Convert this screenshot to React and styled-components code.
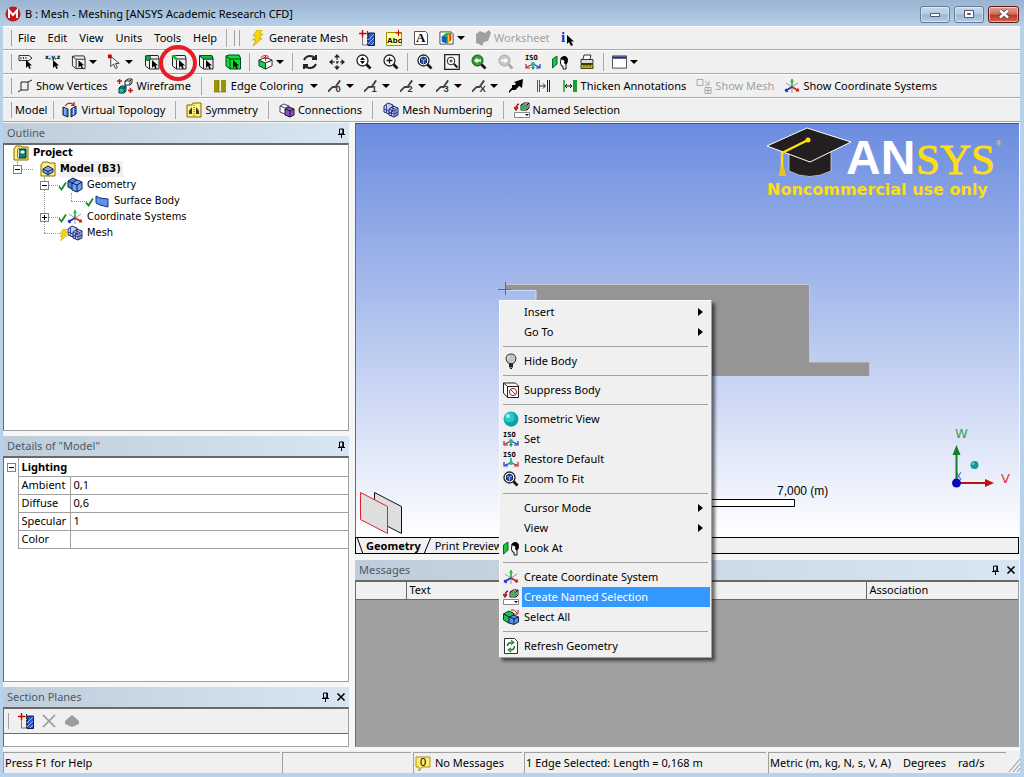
import React, { useState } from 'react';
import styled, { createGlobalStyle } from 'styled-components';

const GlobalStyle = createGlobalStyle`
  * {
    box-sizing: border-box;
  }
  body {
    margin: 0;
    font-family: "Noto Sans", "Open Sans", sans-serif;
    font-size: 11px;
    line-height: 16px;
    color: #000;
  }
  button {
    font: inherit;
    color: inherit;
    background: none;
    border: 0;
    padding: 0;
    white-space: nowrap;
  }
`;

const Window = styled.div`
  display: flex;
  flex-direction: column;
  min-height: 100vh;
  padding: 0 4px 4px 3px;
  background: #b9d1ea;
  position: relative;
  overflow: hidden;
`;

const TitleBar = styled.header`
  display: flex;
  align-items: center;
  gap: 4px;
  height: 26px;
  margin: 0 -4px 0 -3px;
  padding: 2px 5px 0 5px;
  background: linear-gradient(#9ab4d1, #b7cfe8);
`;

const Title = styled.h1`
  flex: 1;
  margin: 0;
  font-size: 11px;
  font-weight: 400;
`;

const CaptionButton = styled.button`
  display: flex;
  align-items: center;
  justify-content: center;
  width: ${(p) => (p.$close ? 31 : 30)}px;
  height: 17px;
  border: 1px solid ${(p) => (p.$close ? '#5c1a1a' : '#5f7a99')};
  border-radius: 3px;
  background: ${(p) => (p.$close
    ? 'linear-gradient(#e0a090 0%, #d0705c 48%, #b93420 52%, #d4654c 100%)'
    : 'linear-gradient(#c6d8ec 0%, #b4cae2 48%, #9bb6d3 52%, #b4cde6 100%)')};
  box-shadow: inset 0 0 0 1px rgba(255, 255, 255, 0.5);
`;

const ToolRow = styled.div`
  display: flex;
  align-items: center;
  height: 24px;
  padding-left: 4px;
  background: #f0f0f0;
  border-top: 1px solid #fff;
  border-bottom: 1px solid #a8a8a8;
`;

const Grip = styled.span`
  width: 5px;
  height: 16px;
  border-right: 1px solid #a0a0a0;
  margin-right: ${(p) => p.$space || 0}px;
`;

const Divider = styled.span`
  width: 1px;
  height: 18px;
  margin: 0 ${(p) => (p.$wide ? 5 : 3)}px;
  background: #a8a8a8;
`;

const MenuButton = styled.button`
  padding: 0 6px;
`;

const IconButton = styled.button`
  display: flex;
  align-items: center;
  justify-content: center;
  width: 27px;
  height: 20px;
`;

const DropButton = styled.button`
  display: flex;
  align-items: center;
  gap: 3px;
  width: 36px;
  height: 20px;
  padding: 0 5px;
`;

const TextButton = styled.button`
  display: flex;
  align-items: center;
  gap: 3px;
  height: 20px;
  padding: 0 ${(p) => p.$pad || 5}px;
  color: ${(p) => (p.disabled ? '#a0a0a0' : '#000')};
`;

const Caret = styled.span`
  border: 4px solid transparent;
  border-top-color: #000;
  border-bottom: 0;
  margin-left: ${(p) => (p.$wide ? 3 : 0)}px;
`;

const Workspace = styled.main`
  flex: 1;
  display: flex;
  gap: 6px;
  padding: 1px 1px 2px 0;
  background: #f6f6f6;
`;

const Sidebar = styled.aside`
  flex: 0 0 346px;
  display: flex;
  flex-direction: column;
  gap: 5px;
`;

const Content = styled.div`
  flex: 1;
  min-width: 0;
  display: flex;
  flex-direction: column;
  gap: 6px;
`;

const Pane = styled.section`
  display: flex;
  flex-direction: column;
  flex: ${(p) => p.$grow || 0} 0 auto;
  height: ${(p) => (p.$grow ? 0 : 'auto')};
`;

const PaneHeader = styled.div`
  display: flex;
  align-items: center;
  gap: 6px;
  height: 20px;
  padding: 0 3px 0 4px;
  background: linear-gradient(90deg, #bfcddb, #d8e6f3);

  h2 {
    flex: 1;
    margin: 0;
    font-size: 11px;
    font-weight: 400;
    color: #4a5a6a;
  }
  button {
    display: flex;
  }
`;

const PaneBody = styled.div`
  flex: 1;
  background: ${(p) => p.$bg || '#fff'};
  border: 1px solid #a0a0a0;
  border-top: 2px solid #696969;
  border-left-color: #696969;
`;

const Tree = styled.ul`
  list-style: none;
  margin: 0;
  padding: 0;
  font-family: "DejaVu Sans Condensed", "DejaVu Sans", sans-serif;
  font-stretch: condensed;
  font-size: 11px;
`;

const TreeRow = styled.li`
  display: flex;
  align-items: center;
  gap: 4px;
  height: 16px;
  padding-left: ${(p) => 9 + p.$depth * 27}px;
  font-weight: ${(p) => (p.$bold ? 700 : 400)};
`;

const TreeLabel = styled.span`
  padding: 0 2px 0 0;
  background: ${(p) => (p.$active ? '#f0f0f0' : 'transparent')};
`;

const TreeSlot = styled.span`
  position: relative;
  width: 23px;
  height: 16px;
  display: flex;
  align-items: center;

  &::before {
    content: '';
    position: absolute;
    left: 4px;
    top: 8px;
    width: 16px;
    border-top: 1px dotted #999;
  }
  &::after {
    content: '';
    position: absolute;
    left: 4px;
    bottom: 8px;
    height: ${(p) => p.$rise}px;
    border-left: 1px dotted #999;
  }
`;

const Toggle = styled.button`
  position: relative;
  z-index: 1;
  width: 9px;
  height: 9px;
  border: 1px solid #808080;
  background: #fff;
  display: flex;

  svg {
    width: 7px;
    height: 7px;
  }
`;

const TreeIcon = styled.span`
  position: relative;
  display: flex;
`;

const Mark = styled.span`
  position: absolute;
  left: -9px;
  top: 4px;
  display: flex;
`;

const DetailsTable = styled.table`
  width: 100%;
  border-collapse: collapse;
  table-layout: fixed;

  th, td {
    height: 18px;
    padding: 0 3px;
    font-weight: 400;
    text-align: left;
    line-height: 16px;
    border: 1px solid #a0a0a0;
  }
  tr:first-child th {
    font-weight: 700;
    border-top: 0;
  }
  td:first-child {
    padding: 0 3px;
    border: 0;
    vertical-align: middle;
  }
  td:last-child, th:last-child {
    border-right: 0;
  }
`;

const PlaneTools = styled.div`
  display: flex;
  align-items: center;
  height: 25px;
  background: #f0f0f0;
  border-bottom: 1px solid #696969;

  ${IconButton} {
    width: 23px;
  }
`;

const PlaneList = styled.div`
  height: 12px;
`;

const Viewport = styled.div`
  flex: 414 0 0;
  position: relative;
  overflow: hidden;
  border-left: 1px solid #696969;
  border-top: 1px solid #555;
  background: linear-gradient(#6b8cdf, #ffffff);
`;

const Overlay = styled.svg`
  position: absolute;
  left: ${(p) => p.$left}px;
  right: ${(p) => p.$right}px;
  top: ${(p) => p.$top}px;
  bottom: ${(p) => p.$bottom}px;
  display: block;
`;

const ViewArea = styled.div`
  flex: 431 0 0;
  display: flex;
  flex-direction: column;
`;

const ViewTabs = styled.div`
  display: flex;
  height: 17px;
  gap: 2px;
  background: #f0f0f0;
  border: 1px solid #000;

  svg {
    margin: -1px 0;
  }
`;

const ViewTab = styled.button`
  line-height: 14px;
  font-weight: ${(p) => (p.$active ? 700 : 400)};
`;

const MessagesTable = styled.table`
  width: 100%;
  border-collapse: collapse;
  table-layout: fixed;
  background: #f0f0f0;

  th {
    height: 17px;
    padding: 0 3px;
    font-weight: 400;
    text-align: left;
    border-right: 1px solid #696969;
    border-bottom: 1px solid #696969;
  }
  th:last-child {
    border-right: 0;
  }
`;

const StatusBar = styled.footer`
  display: flex;
  gap: 2px;
  height: 24px;
  padding-top: 2px;
  background: #f0f0f0;
  border-top: 1px solid #fff;
`;

const StatusCell = styled.div`
  display: flex;
  align-items: center;
  gap: 4px;
  flex: ${(p) => (p.$width ? `0 0 ${p.$width}px` : '1')};
  padding-left: 1px;
  white-space: nowrap;
  border-top: 1px solid #a0a0a0;
  border-left: 1px solid #a0a0a0;
`;

const Units = styled.span`
  margin-right: 8px;
`;

const ContextMenu = styled.div`
  position: absolute;
  left: 499px;
  top: 300px;
  width: 213px;
  padding: 1px;
  background: #f0f0f0;
  border: 1px solid #fafafa;
  border-right-color: #a0a0a0;
  border-bottom-color: #a0a0a0;
  box-shadow: 3px 3px 3px rgba(0, 0, 0, 0.55);
`;

const ContextItem = styled.button`
  display: flex;
  align-items: center;
  width: 100%;
  height: 20px;
  text-align: left;
`;

const ContextIcon = styled.span`
  display: flex;
  width: 21px;
  padding-left: 2px;
`;

const ContextLabel = styled.span`
  flex: 1;
  display: flex;
  align-items: center;
  justify-content: space-between;
  height: 20px;
  padding: 0 7px 0 2px;
  color: ${(p) => (p.$active ? '#fff' : '#000')};
  background: ${(p) => (p.$active ? '#3399ff' : 'transparent')};
`;

const Submenu = styled.span`
  border: 4px solid transparent;
  border-left: 5px solid #000;
  border-right: 0;
`;

const ContextRule = styled.hr`
  height: 1px;
  margin: 4px 2px;
  border: 0;
  background: #a0a0a0;
`;

const Highlight = styled.svg`
  position: absolute;
  left: 158px;
  top: 43px;
  pointer-events: none;
`;

const Brand = styled.div`
  position: absolute;
  right: 16px;
  top: 3px;
  width: 238px;
`;

const cursor = <path d="M8 6v8l2-2 1.4 3 1.4-.7L11.500 11.500H14z" fill="#000" />;
const boxLines = <path d="M1.500 2l3-.5h9.500l1 3v10.500H5.500L1.500 12zM1.500 2l4 3h9.500M5.500 5v10" fill="none" stroke="#222" />;
const zoomLens = (
  <>
    <circle cx="6.500" cy="6.500" r="5.500" fill="#fff" stroke="#222" strokeWidth="1.300" />
    <path d="M10.500 10.500l4 4" stroke="#111" strokeWidth="2.600" />
  </>
);
const isoText = <text x="0" y="6" fontFamily="DejaVu Sans Mono" fontSize="7" fontWeight="700">ISO</text>;

// all glyphs sit on a 16x16 grid
const GLYPHS = {
  app: (
    <>
      <circle cx="8" cy="8" r="7.500" fill="#c4161c" />
      <path d="M4 12V4.500L8 9l4-4.500V12" fill="none" stroke="#fff" strokeWidth="2" />
    </>
  ),
  bolt: <path d="M7 0h5L9.500 4H13L8.500 8.500H12L3 16l3-6H2.500L6.500 6H3z" fill="#ffd800" stroke="#b59000" strokeWidth=".6" />,
  section: (
    <>
      <path d="M3.500 4v11H9M6 3.500h3" fill="none" stroke="#778" />
      <path d="M9 3h6.500v12.500H9z" fill="#2f55c8" stroke="#123" />
      <path d="M9 10l6-6M9 14l6-6M12 15l3-3" stroke="#9db8ff" />
      <path d="M3.500 0v7M0 3.500h7" stroke="#c00" strokeWidth="1.400" />
      <path d="M8.500 1v15" stroke="#333" strokeDasharray="2 1" />
    </>
  ),
  abc: (
    <>
      <path d="M.5 2.500h15v13H.5z" fill="#ffffa0" stroke="#a09000" />
      <text x="1" y="13" fontFamily="Liberation Sans" fontSize="8" fontWeight="700">Abc</text>
      <path d="M12.500 0v6M9.500 3h6" stroke="#c00" />
    </>
  ),
  letter: (
    <>
      <path d="M1.500 1.500h11l2 2v11h-13z" fill="#fff" stroke="#555" />
      <text x="3" y="12" fontFamily="Liberation Serif" fontSize="13" fontWeight="700">A</text>
    </>
  ),
  image: (
    <>
      <path d="M1 1.500h12l2 2V14.500H1z" fill="#fff" stroke="#444" />
      <path d="M3 6l4-3 6-1v8l-4 4-6-2z" fill="#18b848" />
      <path d="M3 6l5 1v6.500l-5-1.500z" fill="#1b4ee0" />
      <path d="M11 3.500l2-1.500v8l-2 2z" fill="#f03010" />
      <path d="M9.500 5l1.500-1.500v8.500l-1.500 1.500z" fill="#ffd000" />
    </>
  ),
  worksheet: <path d="M1 4l4-3 5 2 4-3 2 3-3 8-4 1-2 4-3-2-3-1z" fill="#a0a0a0" />,
  info: (
    <>
      <text x="1" y="12" fontFamily="Liberation Serif" fontSize="15" fontWeight="700" fill="#1030e0">i</text>
      <path d="M7 5v9l2-2 2 4 2-1-2-3.500h3z" />
    </>
  ),
  label: (
    <>
      <path d="M1 1.500h10l3 2.500-3 2.500H1zM3 3v2M5.500 3v2M8 3v2" fill="none" stroke="#333" />
      {cursor}
    </>
  ),
  xyz: (
    <>
      <text x="0" y="5" fontFamily="DejaVu Sans" fontSize="6" fontWeight="700">x,y,z</text>
      {cursor}
    </>
  ),
  boxSelect: <>{boxLines}{cursor}</>,
  arrowSelect: (
    <>
      <path d="M4 2v11l3-3 2 5 2-1-2-4.500h4z" fill="#fff" stroke="#333" />
      <path d="M1 0h4v4H1z" fill="#c00" />
    </>
  ),
  vertexSelect: <>{boxLines}<circle cx="4" cy="4" r="2.500" fill="#18b040" stroke="#052" />{cursor}</>,
  edgeSelect: <>{boxLines}<path d="M1.500 1.500l4.500 4" stroke="#10c030" strokeWidth="3" />{cursor}</>,
  faceSelect: <>{boxLines}<path d="M1.500 1.500h12l1.500 3.500H5z" fill="#14c032" stroke="#053" />{cursor}</>,
  bodySelect: (
    <>
      <path d="M1 2l3-1h10l1.500 3v11H5L1 12z" fill="#11e030" stroke="#042" />
      <path d="M1 2l4 3h10M5 5v10" fill="none" stroke="#042" />
      {cursor}
    </>
  ),
  extend: (
    <>
      <path d="M1 6l7 3v6.500L1 12z" fill="#19d44a" stroke="#033" />
      <path d="M8 9l7-3v6l-7 3.500z" fill="#fff" stroke="#222" />
      <path d="M1 6l7-3 7 3-7 3z" fill="#fff" stroke="#222" />
      <path d="M3 3q5-4 9 0M8 1v6M5 4h6" fill="none" stroke="#d02020" />
    </>
  ),
  rotate: <path d="M2 6q2-4 6-4 3 0 5 2M14 1v4h-4M14 10q-2 4-6 4-3 0-5-2M2 15v-4h4" fill="none" stroke="#222" strokeWidth="2" />,
  pan: (
    <>
      <path d="M8 3v10M3 8h10" stroke="#222" strokeDasharray="3 1" />
      <path d="M8 0l3 3.500H5zM8 16l3-3.500H5zM0 8l3.500-3v6zM16 8l-3.500-3v6z" fill="#222" />
    </>
  ),
  zoomUpDown: <>{zoomLens}<path d="M6.500 3L9 6H4zM6.500 10L9 7H4z" /></>,
  zoomIn: <>{zoomLens}<path d="M6.500 3.500v6M3.500 6.500h6" stroke="#111" strokeWidth="1.300" /></>,
  zoomFit: (
    <>
      {zoomLens}
      <path d="M6.500 3l3 1.500v4l-3 1.500-3-1.500v-4z" fill="#2d50a8" stroke="#0b1b55" />
      <path d="M3.500 4.800l3 1.500 3-1.500M6.500 6.300V10" fill="none" stroke="#bcd0ff" strokeWidth=".7" />
    </>
  ),
  zoomBox: (
    <>
      <path d="M.7.7h14.600v14.600H.7z" fill="#f4f4f4" stroke="#222" strokeWidth="1.300" />
      <circle cx="7" cy="7" r="3.800" fill="#fff" stroke="#222" />
      <path d="M10 10l3.500 3.500" stroke="#111" strokeWidth="2" />
      <path d="M5.500 7h3M7 5.500v3" stroke="#222" />
    </>
  ),
  zoomPrev: (
    <>
      <circle cx="6.500" cy="6.500" r="5.500" fill="#2ca02c" stroke="#145014" />
      <path d="M10.500 10.500l4 4" stroke="#111" strokeWidth="2.600" />
      <path d="M3 6.500l3.500-3V5.500H10v2H6.500v2z" fill="#fff" />
    </>
  ),
  zoomNext: (
    <>
      <circle cx="6.500" cy="6.500" r="5.500" fill="#c8c8c8" stroke="#a8a8a8" />
      <path d="M10.500 10.500l4 4" stroke="#a8a8a8" strokeWidth="2.600" />
      <path d="M10 6.500l-3.500-3V5.500H3v2h3.500v2z" fill="#fff" />
    </>
  ),
  iso: (
    <>
      {isoText}
      <path d="M8 14v-4" stroke="#18a040" strokeWidth="1.500" />
      <path d="M8 10l-6 3M1 10v4h4" fill="none" stroke="#c02020" strokeWidth="1.200" />
      <path d="M8 10l6 3M15 10v4h-4" fill="none" stroke="#1838c0" strokeWidth="1.200" />
      <circle cx="8" cy="10" r="2" fill="#16b8b8" />
      <path d="M6 13h4l-2 3z" fill="#18a040" />
    </>
  ),
  isoRestore: (
    <>
      {isoText}
      <path d="M8 7v5" stroke="#18a040" strokeWidth="1.500" />
      <path d="M8 12l-6 2M1 11v4h4" fill="none" stroke="#1838c0" strokeWidth="1.200" />
      <path d="M8 12l6 2M15 11v4h-4" fill="none" stroke="#c02020" strokeWidth="1.200" />
      <circle cx="8" cy="12" r="2" fill="#16b8b8" />
    </>
  ),
  lookAt: (
    <>
      <path d="M.5 5L5 2v8L.5 14z" fill="#18c838" stroke="#063" />
      <path d="M9 4q3-2.500 6 0 1 3 0 5l-1 1v5h-3v-3H9.500L8.500 9z" fill="#fff" stroke="#111" />
      <path d="M8.500 4.500Q10 1.500 13 2q3 1 2.500 4 0 3-2 4.500L12 9q1-2-.5-3-1.500 0-3-1.500z" />
    </>
  ),
  print: (
    <>
      <path d="M4 5l1-4h7l-1 4" fill="#fff" stroke="#333" />
      <path d="M2 5.500h12v4H2z" fill="#ddd" stroke="#333" />
      <path d="M2 10.500h12v4H2z" fill="#c8b820" stroke="#443c00" />
      <path d="M5 11v2M8 11v2M11 11v2" stroke="#443c00" />
    </>
  ),
  windowView: (
    <>
      <path d="M.5 1.500h15v13H.5z" fill="#fff" stroke="#444" />
      <path d="M1 2h14v2.500H1z" fill="#203080" />
    </>
  ),
  vertices: <path d="M4 4h7v8H4zM11 4l4-2M4 12l-3 2" fill="none" stroke="#222" />,
  wireframe: (
    <>
      <path d="M8 3l3-2h4v4l-2 2H8zM8 3h5v4M13 3l2-2" fill="#fff" stroke="#222" />
      <path d="M2 10l2-2h5v5l-2 2H2zM2 10h5v5M7 10l2-2" fill="#18c0c0" stroke="#033" />
      <path d="M0 3h5M2.500 1v5M11 12.500h5M13.500 10v5" stroke="#b02020" strokeWidth="1.500" />
    </>
  ),
  edgeColor: (
    <>
      <path d="M2 2h5v12H2zM9 2h5v12H9z" fill="#9a9400" />
      <path d="M2 14h12M7 2v12" stroke="#666000" strokeWidth=".6" />
    </>
  ),
  direction: <path d="M15 1l-1 9-3-2-3.500 4H4l-3 3v-2l3-3.500V7h3l1-1.500L6 4z" fill="#000" />,
  vectors: (
    <>
      <path d="M2.500 2v12M4.500 2v12" stroke="#d02020" />
      <path d="M12.500 2v12M14.500 2v12" stroke="#222" />
      <path d="M5 8h5M8 5.500L10.500 8 8 10.500" fill="none" stroke="#222" />
    </>
  ),
  thicken: (
    <>
      <path d="M2 2v12" stroke="#18a030" strokeWidth="1.500" />
      <path d="M11 2h4v12h-4z" fill="#18a030" />
      <path d="M3 8h7M5 6L3 8l2 2M8 6l2 2-2 2" fill="none" stroke="#111" />
    </>
  ),
  showMesh: <path d="M1 1.500h6v6H1zM9 3l4 4M13 3v4H9M9 9.500h6v6H9zM12 9.500v6M9 12.500h6" fill="none" stroke="#aaa" />,
  coords: (
    <>
      <path d="M2 5l6 4 6-4M8 9v6" fill="none" stroke="#999" />
      <path d="M8 9V1M6.500 3.500h3" stroke="#18b838" strokeWidth="1.600" />
      <path d="M8 9l-7 4M1.500 11l2 3" stroke="#1830d0" strokeWidth="1.800" />
      <path d="M8 9l7 4M12.500 13.500l2-3" stroke="#d02020" strokeWidth="1.600" />
    </>
  ),
  topology: (
    <>
      <path d="M1 5l5 2v8l-5-2zM9 7l5-3v8l-5 3z" fill="#3f7fd8" stroke="#123" />
      <path d="M3 6v7M11.500 6v7" stroke="#bcd8ff" />
      <path d="M3 4q4-5 9-1M12 0v3.500H9" fill="none" stroke="#c02020" strokeWidth="1.200" />
    </>
  ),
  symmetry: (
    <>
      <path d="M1 3h5l1-2h8v14H1z" fill="#fff27a" stroke="#806800" />
      <path d="M3 12V9l3-4v7zM13 12V9l-3-4v7z" fill="#333" />
      <path d="M8 3v11" stroke="#555" strokeDasharray="1 1" />
    </>
  ),
  connections: (
    <>
      <path d="M1 4l4-2 5 2v6l-4 2-5-2z" fill="#fff" stroke="#446" />
      <path d="M6 7l4-2 5 2v6l-4 2-5-2z" fill="#9050c8" stroke="#213" />
      <path d="M6 7l5 2 4-2M11 9v6" fill="none" stroke="#213" />
      <path d="M1 4l5 2 4-2" fill="none" stroke="#446" />
    </>
  ),
  mesh: (
    <>
      <path d="M1 4l4-3 5 2v6l-4 3-5-2zM6 7l4-3 5 2v7l-4 2-5-2z" fill="#c0cdf6" stroke="#1c2a78" />
      <path d="M1 7l5 2M3.500 2.500v8M6 7l5 2 4-3M11 9v6M6 10l5 2 4-2M8.500 8v6M13 8v6M8 5.500l5 2" fill="none" stroke="#1c2a78" strokeWidth=".8" />
    </>
  ),
  named: (
    <>
      <path d="M7 3l3-2h5v5l-2 2H7zM7 3h6v5M13 3l2-2" fill="#fff" stroke="#111" />
      <path d="M8 3.500h4V7H8z" fill="#20c040" />
      <path d="M5 2Q2 3 2 7M0 5l2 3 2-3" fill="none" stroke="#b01818" strokeWidth="1.400" />
      <path d="M.5 10.500h15v5H.5z" fill="#fff" stroke="#888" />
      <path d="M11 12h4l-2 2z" />
    </>
  ),
  project: (
    <>
      <path d="M1 4l2-3h5l1 1h6v13H1z" fill="#fff06a" stroke="#806c00" />
      <path d="M5 4h8v9H5z" fill="#0c8070" stroke="#023" />
      <path d="M5.500 4v9M8 6h3v2H8z" fill="#fff" stroke="#fff" strokeWidth=".8" />
    </>
  ),
  model: (
    <>
      <path d="M1 4l2-3h5l1 1h6v13H1z" fill="#ffef78" stroke="#806c00" />
      <path d="M3 8l5-3 5 3v3l-5 3-5-3z" fill="#7da0f0" stroke="#13255f" />
      <path d="M3 8l5 2.500L13 8M8 10.500V14" fill="none" stroke="#13255f" />
    </>
  ),
  geometry: (
    <>
      <path d="M1 4l5-3 4 2v7l-5 2-4-2z" fill="#4f86dc" stroke="#0d1f50" />
      <path d="M5 6l5-3 5 2v7l-5 3-5-2z" fill="#6fa4f2" stroke="#0d1f50" />
      <path d="M5 6l5 2 5-3M10 8v7M1 4l4 2" fill="none" stroke="#0d1f50" />
    </>
  ),
  surface: <path d="M2 3l4 2 8 1v8l-8-2-4-2z" fill="#5f94ee" stroke="#12307c" />,
  bulb: (
    <>
      <path d="M5.500 10.500Q3 8 3 5.500 3.500 1 8 1t5 4.500q0 2.500-2.500 5z" fill="#c4c4c4" stroke="#333" />
      <path d="M6 3.500q-1 1-1 2.500" fill="none" stroke="#fff" />
      <path d="M6 11h4v3.500H6z" fill="#222" />
      <path d="M7 15.500h2" stroke="#222" />
    </>
  ),
  suppress: (
    <>
      <path d="M.5 1h12l3 3v11.500h-11L.5 11zM.5 1l4 3.500h11M4.500 4.500v11" fill="#fff" stroke="#222" />
      <circle cx="10" cy="10" r="3.600" fill="none" stroke="#b02020" />
      <path d="M7.500 7.500l5 5" stroke="#b02020" />
    </>
  ),
  sphere: (
    <>
      <circle cx="8" cy="8" r="7.500" fill="#18b4b4" />
      <circle cx="8.500" cy="9" r="6.500" fill="#10a0a4" />
      <circle cx="6.500" cy="6.500" r="5" fill="#28c8c8" />
      <circle cx="5" cy="5" r="2" fill="#a0f4f0" />
    </>
  ),
  selectAll: (
    <>
      <path d="M.5 5l5-3 5 2v7l-5 3-5-3z" fill="#20c040" stroke="#042" />
      <path d="M6 8l5-2 4.500 2v5L11 15.500 6 14z" fill="#5c90e8" stroke="#0d1f50" />
      <path d="M6 8l5 2 4.500-2M11 10v5M.5 5l5.500 3" fill="none" stroke="#0d1f50" />
      <path d="M8 1q4-1 6 3M15 1v4h-4" fill="none" stroke="#c02020" />
    </>
  ),
  refresh: (
    <>
      <path d="M1.500.5h10l3 3v12h-13z" fill="#fff" stroke="#333" />
      <path d="M4.500 8q0-3.500 4-3.500M8 2.500l2.500 2L8 6.500M11.500 8q0 4-4 4M8 10l-2.500 2L8 14" fill="none" stroke="#148024" strokeWidth="1.500" />
    </>
  ),
  remove: <path d="M2 2l12 12M14 2L2 14" stroke="#999" strokeWidth="1.700" />,
  plane: <path d="M8 2l7 6v3l-7 3-7-3V8z" fill="#9c9c9c" />,
  balloon: (
    <>
      <path d="M1 2h14v10H7l-3 4v-4H1z" fill="#ffee70" stroke="#a89020" />
      <text x="5" y="11" fontFamily="Liberation Sans" fontSize="11">0</text>
    </>
  ),
};

const Icon = ({ name, size = 16 }) => (
  <svg width={size} height={size} viewBox="0 0 16 16" aria-hidden="true">{GLYPHS[name]}</svg>
);

// slanted line with its connection count next to it
const EdgeIcon = ({ count }) => (
  <svg width="16" height="16" viewBox="0 0 16 16" aria-hidden="true">
    <path d="M0 14L5 9h3l5-7" fill="none" stroke="#444" strokeWidth="2" />
    <text x="8" y="14" fontFamily="Liberation Sans" fontSize="10" fontWeight="700" fill="#333">{count}</text>
  </svg>
);

const PinGlyph = () => (
  <svg width="9" height="10" viewBox="0 0 9 10" aria-hidden="true">
    <path d="M2.500 1h4v5h-4zM1 6.500h7M4.500 7v3" fill="none" stroke="#000" />
    <path d="M6 1v5" stroke="#000" strokeWidth="1.500" />
  </svg>
);

const CloseGlyph = () => (
  <svg width="10" height="10" viewBox="0 0 10 10" aria-hidden="true">
    <path d="M1.500 1.500l7 7M8.500 1.500l-7 7" stroke="#000" strokeWidth="1.600" />
  </svg>
);

const ToolIcon = ({ name, label, disabled }) => (
  <IconButton aria-label={label} disabled={disabled}><Icon name={name} /></IconButton>
);

const DropIcon = ({ name, label }) => (
  <DropButton aria-label={label}><Icon name={name} /><Caret /></DropButton>
);

const PaneTitle = ({ title, closable }) => (
  <PaneHeader>
    <h2>{title}</h2>
    <button aria-label={`Pin ${title}`}><PinGlyph /></button>
    {closable && <button aria-label={`Close ${title}`}><CloseGlyph /></button>}
  </PaneHeader>
);

const MENUS = ['File', 'Edit', 'View', 'Units', 'Tools', 'Help'];

const TREE = [
  { label: 'Project', icon: 'project', depth: 0, bold: true },
  { label: 'Model (B3)', icon: 'model', depth: 0, bold: true, toggle: '-', rise: 8, active: true },
  { label: 'Geometry', icon: 'geometry', depth: 1, toggle: '-', rise: 8, mark: 'check' },
  { label: 'Surface Body', icon: 'surface', depth: 2, slot: true, rise: 8, mark: 'check' },
  { label: 'Coordinate Systems', icon: 'coords', depth: 1, toggle: '+', rise: 32, mark: 'check' },
  { label: 'Mesh', icon: 'mesh', depth: 1, slot: true, rise: 16, mark: 'bolt' },
];

const DETAILS = [
  ['Ambient', '0,1'],
  ['Diffuse', '0,6'],
  ['Specular', '1'],
  ['Color', ''],
];

const CONTEXT = [
  { label: 'Insert', sub: true },
  { label: 'Go To', sub: true },
  null,
  { label: 'Hide Body', icon: 'bulb' },
  null,
  { label: 'Suppress Body', icon: 'suppress' },
  null,
  { label: 'Isometric View', icon: 'sphere' },
  { label: 'Set', icon: 'iso' },
  { label: 'Restore Default', icon: 'isoRestore' },
  { label: 'Zoom To Fit', icon: 'zoomFit' },
  null,
  { label: 'Cursor Mode', sub: true },
  { label: 'View', sub: true },
  { label: 'Look At', icon: 'lookAt' },
  null,
  { label: 'Create Coordinate System', icon: 'coords' },
  { label: 'Create Named Selection', icon: 'named' },
  { label: 'Select All', icon: 'selectAll' },
  null,
  { label: 'Refresh Geometry', icon: 'refresh' },
];

const ToggleBox = ({ open, label }) => (
  <Toggle aria-label={label}>
    <svg viewBox="0 0 7 7" aria-hidden="true">
      <path d={open ? 'M1 3.500h5' : 'M1 3.500h5M3.500 1v5'} stroke="#000" />
    </svg>
  </Toggle>
);

const OutlineTree = () => (
  <Tree>
    {TREE.map((node) => (
      <TreeRow key={node.label} $depth={node.depth} $bold={node.bold}>
        {(node.toggle || node.slot) && (
          <TreeSlot $rise={node.rise}>
            {node.toggle && <ToggleBox open={node.toggle === '-'} label={`Toggle ${node.label}`} />}
          </TreeSlot>
        )}
        <TreeIcon>
          <Icon name={node.icon} />
          {node.mark && (
            <Mark>
              {node.mark === 'bolt' ? <Icon name="bolt" size={12} /> : (
                <svg width="10" height="10" viewBox="0 0 10 10" aria-hidden="true">
                  <path d="M1 5.500L3.500 8.500 8 1.500" fill="none" stroke="#128a2a" strokeWidth="1.800" />
                </svg>
              )}
            </Mark>
          )}
        </TreeIcon>
        <TreeLabel $active={node.active}>{node.label}</TreeLabel>
      </TreeRow>
    ))}
  </Tree>
);

const Logo = () => (
  <Brand>
    <svg width="238" height="76" viewBox="0 0 238 76" role="img" aria-label="ANSYS Noncommercial use only">
      <path d="M24 22v22q20 11 42 0V22z" fill="#231f20" stroke="#cdd6ee" strokeWidth=".8" />
      <path d="M2 19L42 1l44 14-41 20z" fill="#231f20" stroke="#fff" />
      <path d="M43 13L17 26v20" fill="none" stroke="#ffdd15" strokeWidth="2.500" />
      <path d="M15.500 40h3.500l2 9h-7.500z" fill="#e8c41a" />
      <circle cx="43" cy="13" r="2.500" fill="#ffdd15" />
      <text x="81" y="47" fontFamily="Liberation Sans" fontSize="48" fontWeight="700" fill="#fff">AN</text>
      <text x="151" y="47" fontFamily="Liberation Serif" fontSize="43" fill="#ffdd15" stroke="#ffdd15" strokeWidth=".8">SYS</text>
      <text x="231" y="19" fontFamily="Liberation Sans" fontSize="7" fill="#ffdd15">®</text>
      <text x="2" y="68" fontFamily="DejaVu Sans" fontSize="16" fontWeight="700" fill="#ffdd15">Noncommercial use only</text>
    </svg>
  </Brand>
);

const Scene = () => (
  <Viewport>
    <Overlay $left={142} $top={158} width="376" height="98" viewBox="0 0 376 98">
      <path d="M7 2h305v78h60v14H38V8H7z" fill="#959595" />
      <path d="M7 2.500h304.500v77.500h60V94" fill="none" stroke="#c8c8c8" />
      <path d="M7 8.500h31V30" fill="none" stroke="#cfdcff" />
      <path d="M7.500 0v13M0 7.500h13" stroke="#4468c8" />
    </Overlay>
    <Overlay $left={4} $bottom={2} width="44" height="44" viewBox="0 0 44 44">
      <path d="M14.500 1.500l27 14v27l-27-14z" fill="#dedede" stroke="#111" />
      <path d="M.5 1.500l27 14v27l-27-14z" fill="#dedede" stroke="#e02030" />
    </Overlay>
    <Overlay $left={300} $bottom={29} width="180" height="26" viewBox="0 0 180 26">
      <text x="121" y="13" fontFamily="Liberation Sans" fontSize="12">7,000 (m)</text>
      <path d="M0 17.500h138.500v7H0z" fill="#fff" stroke="#000" />
    </Overlay>
    <Overlay $right={5} $bottom={44} width="64" height="70" viewBox="0 0 64 70">
      <text x="5" y="15" fontFamily="DejaVu Sans" fontSize="13" fill="#3aa648">W</text>
      <text x="51" y="60" fontFamily="DejaVu Sans" fontSize="13" fill="#e03030">V</text>
      <text x="5" y="57" fontFamily="DejaVu Sans" fontSize="10" fill="#5060e0">X</text>
      <path d="M6.500 60V30" stroke="#108020" strokeWidth="2" />
      <path d="M6.500 22l4 10h-8z" fill="#108020" />
      <path d="M7 60h30" stroke="#c01010" strokeWidth="2" />
      <path d="M44 60l-9-4v8z" fill="#c01010" />
      <circle cx="6.500" cy="60" r="4.500" fill="#0a0ab4" />
      <circle cx="24.500" cy="42" r="4" fill="#109898" />
      <circle cx="23" cy="40.500" r="1.500" fill="#50d0d0" />
    </Overlay>
    <Logo />
  </Viewport>
);

const App = () => {
  const [hovered, setHovered] = useState('Create Named Selection');

  return (
    <>
      <GlobalStyle />
      <Window>
        <TitleBar>
          <Icon name="app" />
          <Title>B : Mesh - Meshing [ANSYS Academic Research CFD]</Title>
          <CaptionButton aria-label="Minimize">
            <svg width="12" height="8"><path d="M1.500 3.500h9v3h-9z" fill="#fff" stroke="#556" /></svg>
          </CaptionButton>
          <CaptionButton aria-label="Restore">
            <svg width="12" height="10"><path d="M1.500 1.500h9v7h-9zM4.500 4.500h3v1h-3z" fill="#fff" stroke="#556" /></svg>
          </CaptionButton>
          <CaptionButton aria-label="Close" $close>
            <svg width="12" height="10">
              <path d="M2 1.500l8 7M10 1.500l-8 7" stroke="#544" strokeWidth="4" />
              <path d="M2 1.500l8 7M10 1.500l-8 7" stroke="#fff" strokeWidth="2.400" />
            </svg>
          </CaptionButton>
        </TitleBar>

        <ToolRow>
          <Grip />
          {MENUS.map((menu) => <MenuButton key={menu}>{menu}</MenuButton>)}
          <Divider />
          <Grip />
          <Grip $space={5} />
          <TextButton><Icon name="bolt" />Generate Mesh</TextButton>
          <ToolIcon name="section" label="New section plane" />
          <ToolIcon name="abc" label="Annotation" />
          <ToolIcon name="letter" label="Comment" />
          <DropIcon name="image" label="Figure" />
          <TextButton disabled><Icon name="worksheet" />Worksheet</TextButton>
          <ToolIcon name="info" label="Selection information" />
        </ToolRow>

        <ToolRow>
          <Grip />
          <ToolIcon name="label" label="Label" />
          <ToolIcon name="xyz" label="Coordinates" />
          <DropIcon name="boxSelect" label="Select mode" />
          <DropIcon name="arrowSelect" label="Selection type" />
          <ToolIcon name="vertexSelect" label="Vertex" />
          <ToolIcon name="edgeSelect" label="Edge" />
          <ToolIcon name="faceSelect" label="Face" />
          <ToolIcon name="bodySelect" label="Body" />
          <Divider />
          <DropIcon name="extend" label="Extend selection" />
          <Divider />
          <ToolIcon name="rotate" label="Rotate" />
          <ToolIcon name="pan" label="Pan" />
          <ToolIcon name="zoomUpDown" label="Zoom" />
          <ToolIcon name="zoomIn" label="Box zoom" />
          <Divider />
          <ToolIcon name="zoomFit" label="Zoom to fit" />
          <ToolIcon name="zoomBox" label="Magnifier" />
          <ToolIcon name="zoomPrev" label="Previous view" />
          <ToolIcon name="zoomNext" label="Next view" disabled />
          <ToolIcon name="iso" label="Isometric" />
          <ToolIcon name="lookAt" label="Look at" />
          <ToolIcon name="print" label="Rescale annotation" />
          <Divider />
          <DropIcon name="windowView" label="Viewports" />
        </ToolRow>

        <ToolRow>
          <Grip />
          <TextButton><Icon name="vertices" />Show Vertices</TextButton>
          <TextButton><Icon name="wireframe" />Wireframe</TextButton>
          <Divider $wide />
          <TextButton><Icon name="edgeColor" />Edge Coloring<Caret $wide /></TextButton>
          {['0', '1', '2', '3', 'X'].map((count) => (
            <DropButton key={count} aria-label={`Edges ${count}`}>
              <EdgeIcon count={count} />
              <Caret />
            </DropButton>
          ))}
          <ToolIcon name="direction" label="Direction" />
          <ToolIcon name="vectors" label="Vectors" />
          <TextButton><Icon name="thicken" />Thicken Annotations</TextButton>
          <TextButton disabled><Icon name="showMesh" />Show Mesh</TextButton>
          <TextButton><Icon name="coords" />Show Coordinate Systems</TextButton>
        </ToolRow>

        <ToolRow>
          <Grip />
          <TextButton $pad={3}>Model</TextButton>
          <Divider />
          <TextButton><Icon name="topology" />Virtual Topology</TextButton>
          <Divider $wide />
          <TextButton><Icon name="symmetry" />Symmetry</TextButton>
          <Divider $wide />
          <TextButton><Icon name="connections" />Connections</TextButton>
          <Divider $wide />
          <TextButton><Icon name="mesh" />Mesh Numbering</TextButton>
          <Divider $wide />
          <TextButton><Icon name="named" />Named Selection</TextButton>
        </ToolRow>

        <Workspace>
          <Sidebar>
            <Pane $grow={308}>
              <PaneTitle title="Outline" />
              <PaneBody><OutlineTree /></PaneBody>
            </Pane>
            <Pane $grow={246}>
              <PaneTitle title={'Details of "Model"'} />
              <PaneBody>
                <DetailsTable>
                  <colgroup>
                    <col style={{ width: 14 }} />
                    <col style={{ width: 52 }} />
                    <col />
                  </colgroup>
                  <tbody>
                    <tr>
                      <td><ToggleBox open label="Toggle Lighting" /></td>
                      <th colSpan={2}>Lighting</th>
                    </tr>
                    {DETAILS.map(([name, value]) => (
                      <tr key={name}>
                        <td />
                        <th scope="row">{name}</th>
                        <td>{value}</td>
                      </tr>
                    ))}
                  </tbody>
                </DetailsTable>
              </PaneBody>
            </Pane>
            <Pane>
              <PaneTitle title="Section Planes" closable />
              <PaneBody>
                <PlaneTools>
                  <Grip $space={5} />
                  <ToolIcon name="section" label="New plane" />
                  <ToolIcon name="remove" label="Delete plane" disabled />
                  <ToolIcon name="plane" label="Show whole elements" disabled />
                </PlaneTools>
                <PlaneList />
              </PaneBody>
            </Pane>
          </Sidebar>

          <Content>
            <ViewArea>
              <Scene />
              <ViewTabs>
                <svg width="8" height="17"><path d="M1 0l6 17" stroke="#000" /></svg>
                <ViewTab $active>Geometry</ViewTab>
                <svg width="10" height="17"><path d="M1 17L8 0" stroke="#000" /></svg>
                <ViewTab>Print Preview</ViewTab>
              </ViewTabs>
            </ViewArea>
            <Pane $grow={187}>
              <PaneTitle title="Messages" closable />
              <PaneBody $bg="#a0a0a0">
                <MessagesTable>
                  <colgroup>
                    <col style={{ width: 50 }} />
                    <col />
                    <col style={{ width: 152 }} />
                  </colgroup>
                  <thead>
                    <tr>
                      <th aria-label="Type" />
                      <th>Text</th>
                      <th>Association</th>
                    </tr>
                  </thead>
                </MessagesTable>
              </PaneBody>
            </Pane>
          </Content>
        </Workspace>

        <StatusBar>
          <StatusCell>Press F1 for Help</StatusCell>
          <StatusCell $width={129} />
          <StatusCell $width={109}><Icon name="balloon" />No Messages</StatusCell>
          <StatusCell $width={242}>1 Edge Selected: Length = 0,168 m</StatusCell>
          <StatusCell $width={238}>
            <Units>Metric (m, kg, N, s, V, A)</Units>
            <Units>Degrees</Units>
            <span>rad/s</span>
          </StatusCell>
          <svg width="12" height="21" aria-hidden="true">
            <path d="M1 20L12 7M5 20l7-8M9 20l3-4" stroke="#8c8c8c" />
          </svg>
        </StatusBar>

        <ContextMenu role="menu">
          {CONTEXT.map((item, i) => (item ? (
            <ContextItem key={item.label} role="menuitem" onMouseEnter={() => setHovered(item.label)}>
              <ContextIcon>{item.icon && <Icon name={item.icon} />}</ContextIcon>
              <ContextLabel $active={hovered === item.label}>
                {item.label}
                {item.sub && <Submenu />}
              </ContextLabel>
            </ContextItem>
          ) : <ContextRule key={i} />))}
        </ContextMenu>

        <Highlight width="40" height="40" viewBox="0 0 40 40">
          <ellipse cx="20" cy="20" rx="17" ry="16" fill="none" stroke="#e81c24" strokeWidth="4" />
        </Highlight>
      </Window>
    </>
  );
};

export default App;
